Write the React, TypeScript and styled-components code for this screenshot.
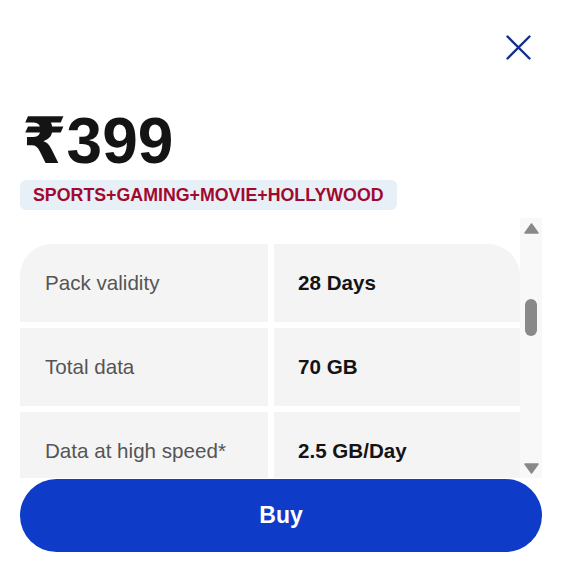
import { Fragment } from "react";
import styled, { createGlobalStyle } from "styled-components";

const GlobalStyle = createGlobalStyle`
    html, body {
        margin: 0;
        padding: 0;
        background: #ffffff;
    }
    body {
        font-family: "Liberation Sans", Arial, "DejaVu Sans", sans-serif;
        color: #141414;
    }
    * {
        box-sizing: border-box;
    }
`;

const Sheet = styled.div`
    width: 565px;
    padding: 35px 23px 0 20px;
    display: flex;
    flex-direction: column;
`;
const CloseRow = styled.div`
    display: flex;
    justify-content: flex-end;
    padding-right: 11px;
`;
const CloseButton = styled.button`
    width: 25px;
    height: 25px;
    padding: 0;
    border: none;
    background: transparent;
    cursor: pointer;
    display: flex;
`;
const Price = styled.div`
    margin-top: 49px;
    margin-left: 2px;
    font-size: 64px;
    line-height: 64px;
    font-weight: 700;
    color: #141414;
`;
const Tag = styled.div`
    margin-top: 7px;
    align-self: flex-start;
    height: 30px;
    display: flex;
    align-items: center;
    padding: 0 13px;
    border-radius: 6px;
    background: #e7f0f7;
    color: #a3082e;
    font-size: 17.8px;
    font-weight: 700;
`;
const ScrollBox = styled.div`
    margin-top: 8px;
    height: 260px;
    display: flex;
`;
const Viewport = styled.div`
    flex: 1;
    height: 100%;
    padding-top: 26px;
    overflow-y: scroll;
    scrollbar-width: none;
    &::-webkit-scrollbar {
        display: none;
    }
`;
const Track = styled.div`
    width: 22px;
    height: 100%;
    background: #f8f8f8;
    display: flex;
    flex-direction: column;
    align-items: center;
`;
const ArrowButton = styled.div`
    height: 20px;
    width: 100%;
    display: flex;
    align-items: center;
    justify-content: center;
`;
const Rail = styled.div`
    flex: 1;
    width: 100%;
    display: flex;
    justify-content: center;
`;
const Thumb = styled.div`
    margin-top: 61px;
    width: 12px;
    height: 37px;
    border-radius: 6px;
    background: #898989;
`;
const Table = styled.div`
    display: grid;
    grid-template-columns: 248px 246px;
    gap: 6px;
    border-radius: 32px 32px 0 0;
    overflow: hidden;
`;
const Cell = styled.div<{ $strong?: boolean }>`
    height: 78px;
    display: flex;
    align-items: center;
    padding-left: ${(p) => (p.$strong ? "24px" : "25px")};
    background: #f4f4f4;
    font-size: 20.6px;
    font-weight: ${(p) => (p.$strong ? 700 : 400)};
    color: ${(p) => (p.$strong ? "#141414" : "#555555")};
`;
const BuyButton = styled.button`
    margin-top: 1px;
    width: 100%;
    height: 73px;
    border: none;
    border-radius: 37px;
    background: #0e3cc9;
    color: #ffffff;
    font-family: "Liberation Sans", Arial, sans-serif;
    font-size: 23px;
    font-weight: 700;
    cursor: pointer;
`;

const details = [
    ["Pack validity", "28 Days"],
    ["Total data", "70 GB"],
    ["Data at high speed*", "2.5 GB/Day"],
    ["Voice", "Unlimited"],
    ["SMS", "100 SMS/Day"],
];

export default function App() {
    return (
        <>
            <GlobalStyle />
            <Sheet>
                <CloseRow>
                    <CloseButton aria-label="Close">
                        <svg width="25" height="25" viewBox="0 0 25 25">
                            <path d="M1.5 1.5 L23.5 23.5 M23.5 1.5 L1.5 23.5" stroke="#10308c" strokeWidth="2.4" strokeLinecap="round" fill="none" />
                        </svg>
                    </CloseButton>
                </CloseRow>
                <Price>₹399</Price>
                <Tag>SPORTS+GAMING+MOVIE+HOLLYWOOD</Tag>
                <ScrollBox>
                    <Viewport>
                        <Table>
                            {details.map(([label, value]) => (
                                <Fragment key={label}>
                                    <Cell>{label}</Cell>
                                    <Cell $strong>{value}</Cell>
                                </Fragment>
                            ))}
                        </Table>
                    </Viewport>
                    <Track>
                        <ArrowButton>
                            <svg width="15" height="11" viewBox="0 0 15 11">
                                <path d="M7.5 1 L14 10 L1 10 Z" fill="#898989" stroke="#898989" strokeWidth="1.5" strokeLinejoin="round" />
                            </svg>
                        </ArrowButton>
                        <Rail>
                            <Thumb />
                        </Rail>
                        <ArrowButton>
                            <svg width="15" height="11" viewBox="0 0 15 11">
                                <path d="M1 1 L14 1 L7.5 10 Z" fill="#898989" stroke="#898989" strokeWidth="1.5" strokeLinejoin="round" />
                            </svg>
                        </ArrowButton>
                    </Track>
                </ScrollBox>
                <BuyButton>Buy</BuyButton>
            </Sheet>
        </>
    );
}
